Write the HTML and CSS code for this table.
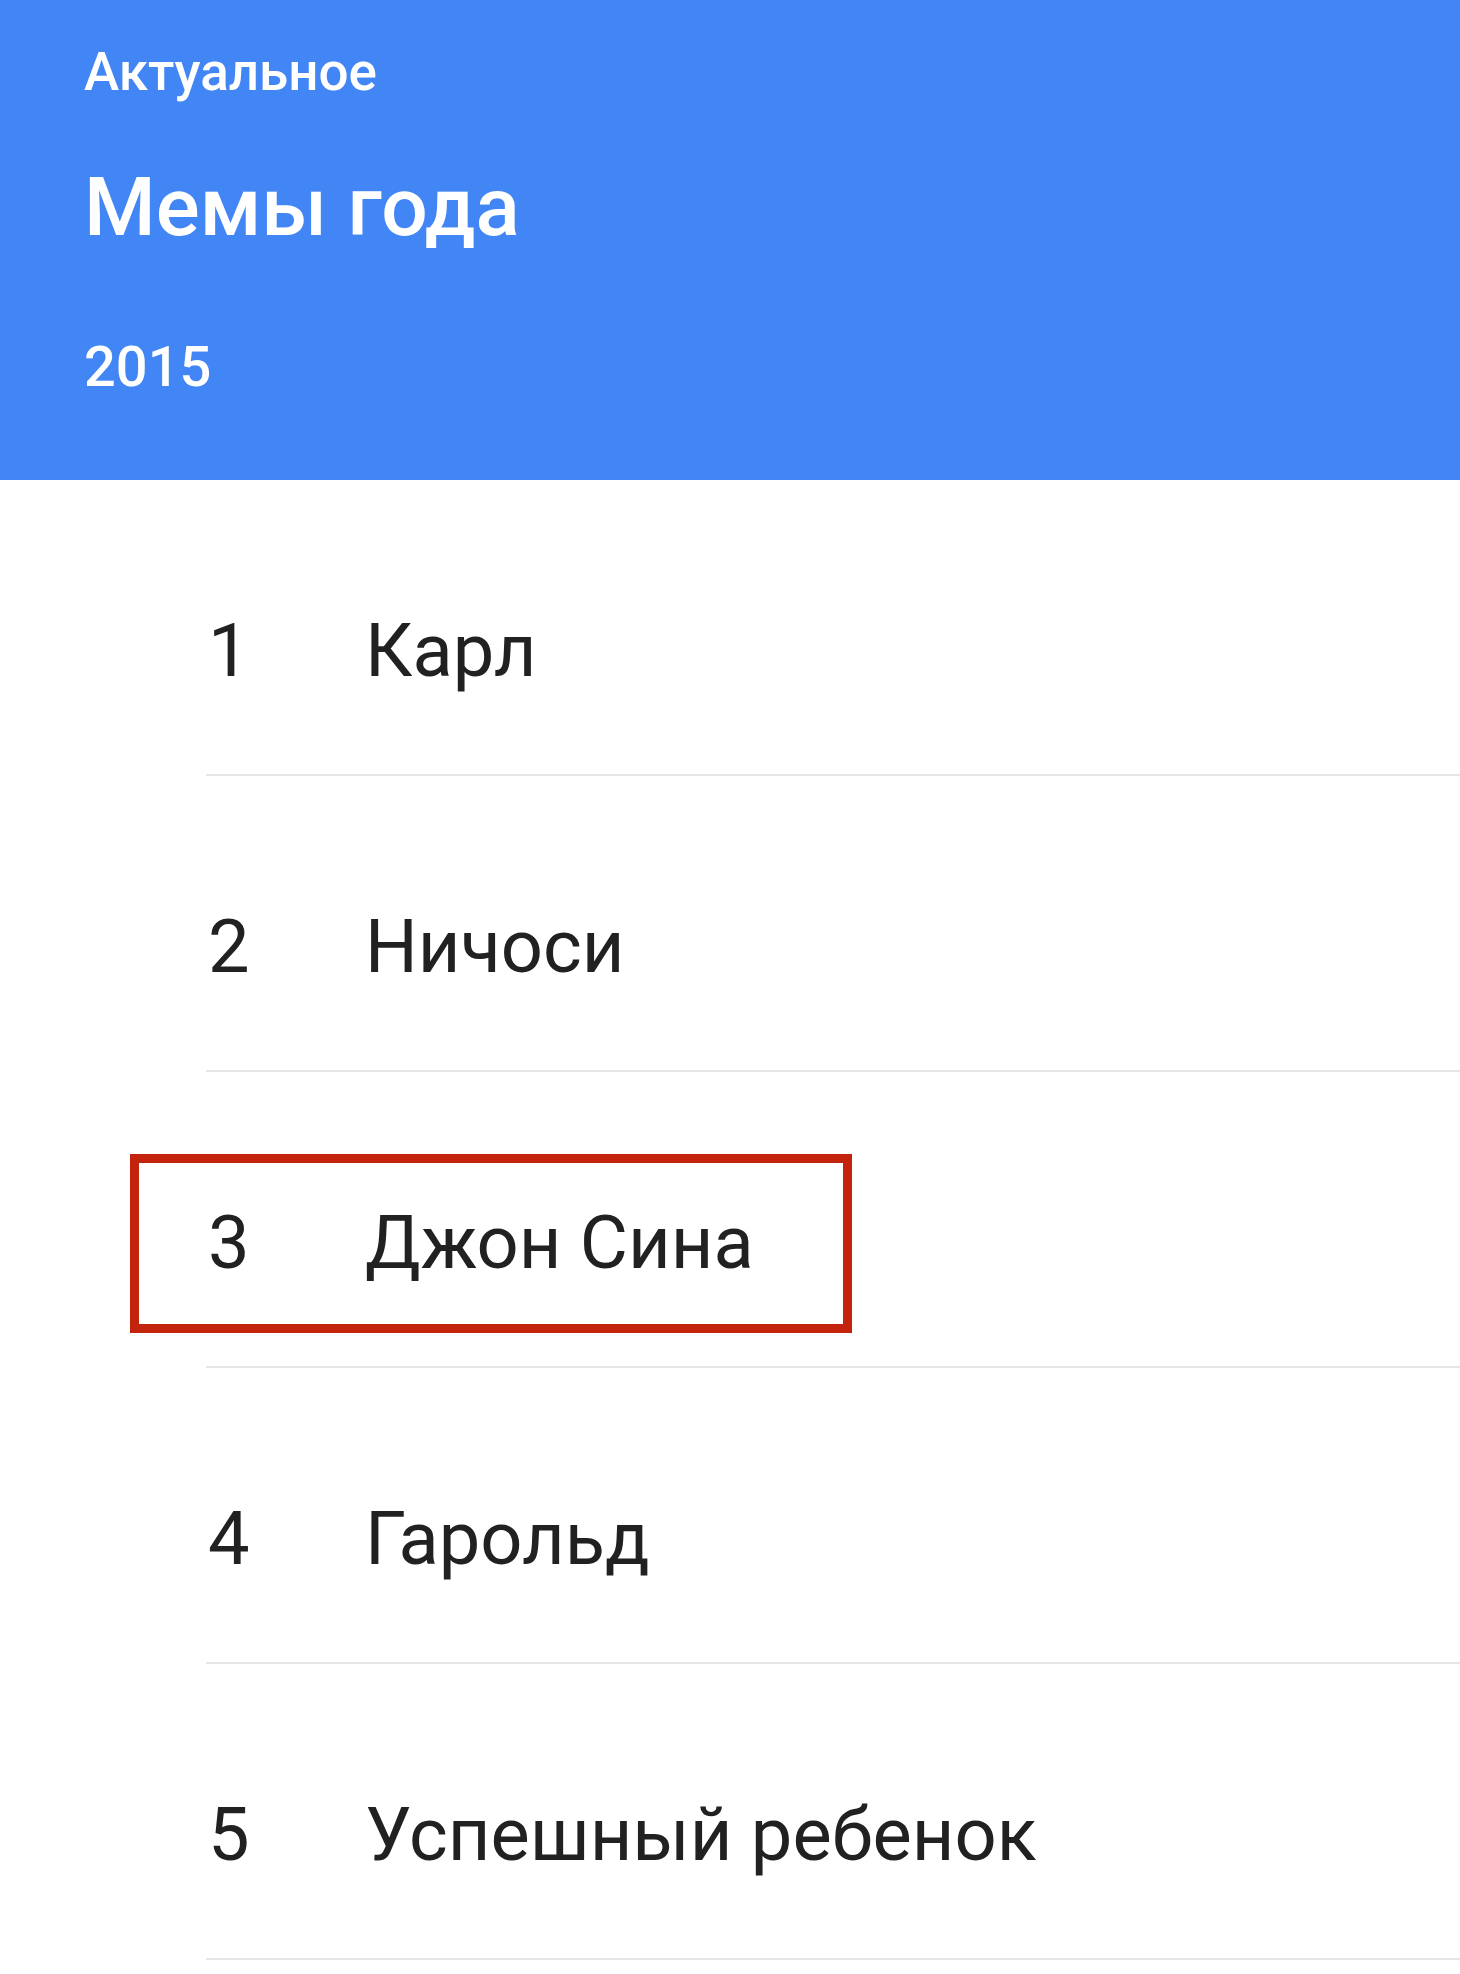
FILE: index.html
```html
<!DOCTYPE html>
<html lang="ru">
<head>
<meta charset="utf-8">
<title>Мемы года</title>
<link rel="stylesheet" href="styles.css">
</head>
<body>
<header class="hero">
  <div class="hero-kicker">Актуальное</div>
  <h1 class="hero-title">Мемы года</h1>
  <div class="hero-year">2015</div>
</header>
<ol class="rank-list">
  <li class="rank-row"><span class="rank-num">1</span><span class="rank-name">Карл</span></li>
  <li class="rank-row"><span class="rank-num">2</span><span class="rank-name">Ничоси</span></li>
  <li class="rank-row rank-row--marked"><span class="mark-box"></span><span class="rank-num">3</span><span class="rank-name">Джон Сина</span></li>
  <li class="rank-row"><span class="rank-num">4</span><span class="rank-name">Гарольд</span></li>
  <li class="rank-row"><span class="rank-num">5</span><span class="rank-name">Успешный ребенок</span></li>
</ol>
</body>
</html>
```
FILE: styles.css
```css
html, body {
  margin: 0;
  padding: 0;
  background: #ffffff;
}
body {
  font-family: Roboto, "Noto Sans", "Liberation Sans", sans-serif;
  color: #212121;
}
.hero {
  background: #4285f4;
  color: #ffffff;
  padding: 42px 0 78px 84px;
  height: 360px;
  box-sizing: content-box;
}
.hero-kicker {
  font-size: 53px;
  font-weight: 500;
  line-height: 60px;
}
.hero-title {
  margin: 57px 0 0;
  font-size: 82px;
  font-weight: 500;
  line-height: 96px;
}
.hero-year {
  margin-top: 78px;
  font-size: 56px;
  font-weight: 500;
  line-height: 68px;
}
.rank-list {
  list-style: none;
  margin: 0 0 0 206px;
  padding: 0;
}
.rank-row {
  position: relative;
  display: grid;
  grid-template-columns: 159px 1fr;
  padding: 127px 0 79px;
  font-size: 74px;
  line-height: 88px;
  border-bottom: 2px solid #e6e6e6;
}
.rank-num {
  padding-left: 2px;
}
.mark-box {
  position: absolute;
  left: -76px;
  top: 82px;
  width: 722px;
  height: 179px;
  box-sizing: border-box;
  border: 9px solid #c3240e;
}
```
